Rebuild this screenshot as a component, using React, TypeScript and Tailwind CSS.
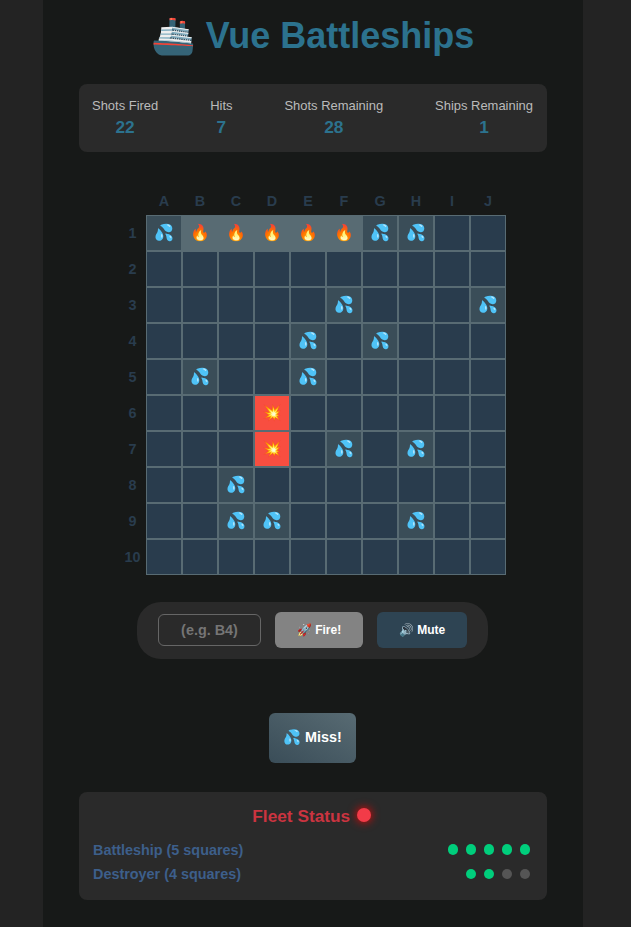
const COLUMNS = ['A', 'B', 'C', 'D', 'E', 'F', 'G', 'H', 'I', 'J'];

// M = miss, S = sunk, H = hit, . = untouched
const BOARD = [
  'MSSSSSMM..',
  '..........',
  '.....M...M',
  '....M.M...',
  '.M..M.....',
  '...H......',
  '...H.M.M..',
  '..M.......',
  '..MM...M..',
  '..........',
];

const CELLS: Record<string, { tone: string; mark: string }> = {
  '.': { tone: 'bg-[#293c4d]', mark: '' },
  M: { tone: 'bg-[#3a4d58]', mark: '💦' },
  S: { tone: 'bg-[#586b73]', mark: '🔥' },
  H: { tone: 'bg-[#f84e40]', mark: '💥' },
};

const STATS = [
  { label: 'Shots Fired', value: 22 },
  { label: 'Hits', value: 7 },
  { label: 'Shots Remaining', value: 28 },
  { label: 'Ships Remaining', value: 1 },
];

const FLEET = [
  { name: 'Battleship (5 squares)', dots: [true, true, true, true, true], dotClass: 'mb-px h-[11px]' },
  { name: 'Destroyer (4 squares)', dots: [true, true, false, false], dotClass: 'h-[10px]' },
];

function Stats() {
  return (
    <section className="mt-[14px] flex h-[68px] justify-between rounded-lg bg-[#2a2a2a] pt-3 pr-[14px] pl-[13px] text-center">
      {STATS.map((s) => (
        <div key={s.label}>
          <div className="text-[12.96px] leading-[19px] text-[#bbbbbb]">{s.label}</div>
          <div className="text-[17.28px] leading-6 font-bold text-[#2c728e]">{s.value}</div>
        </div>
      ))}
    </section>
  );
}

function Board() {
  return (
    <section className="mt-9 ml-10 w-[387px] text-[14.4px] font-bold text-[#293c4d]">
      <div className="flex h-[27px] pl-[27px]">
        {COLUMNS.map((c) => (
          <div key={c} className="w-9 text-center leading-[26px]">{c}</div>
        ))}
      </div>
      <div className="flex">
        <div className="w-[27px]">
          {BOARD.map((_, i) => (
            <div key={i} className="flex h-9 items-center justify-center pt-[2px]">{i + 1}</div>
          ))}
        </div>
        <div className="w-[360px]">
          {BOARD.map((row, r) => (
            <div key={r} className="flex">
              {row.split('').map((c, i) => (
                <div key={i} className={`flex size-9 items-center justify-center border border-[#586b73] text-[16px] leading-none font-normal ${CELLS[c].tone}`}>
                  {CELLS[c].mark}
                </div>
              ))}
            </div>
          ))}
        </div>
      </div>
    </section>
  );
}

function Controls() {
  return (
    <section className="mt-[27px] ml-[58px] flex h-[57px] w-[351px] items-start gap-[14px] rounded-[24px] bg-[#2a2a2a] px-[21px] pt-[10px]">
      <input
        placeholder="(e.g. B4)"
        className="mt-[2px] h-8 w-[103px] rounded-md border border-[#666666] bg-transparent text-center text-[14.4px] font-bold placeholder:text-[#757575]"
      />
      <button className="h-9 w-[88px] rounded-md bg-[#838383] text-[12px] font-bold whitespace-nowrap text-white">🚀 Fire!</button>
      <button className="h-9 w-[90px] rounded-md bg-[#2e4453] text-[12px] font-bold whitespace-nowrap text-white">🔊 Mute</button>
    </section>
  );
}

function Fleet() {
  return (
    <section className="mt-[29px] h-[108px] rounded-lg bg-[#2a2a2a] px-[14px] pt-3">
      <h2 className="flex h-6 items-center justify-center pr-[11px] pl-2 text-[17.28px] leading-6 font-bold text-[#cb3440]">
        Fleet Status
        <span className="-mt-[2px] ml-[6.5px] size-[14px] rounded-full bg-[#f23b48] shadow-[0_0_10px_#ff0000]" />
      </h2>
      <div className="mt-[10px]">
        {FLEET.map((ship) => (
          <div key={ship.name} className="flex h-6 items-center justify-between pr-[3px] text-[14.4px] leading-6 font-bold text-[#3d5f8b]">
            <span className="pb-px">{ship.name}</span>
            <span className="flex gap-2">
              {ship.dots.map((afloat, i) => (
                <span key={i} className={`w-[10px] rounded-full ${ship.dotClass} ${afloat ? 'bg-[#00ce7c]' : 'bg-[#555555]'}`} />
              ))}
            </span>
          </div>
        ))}
      </div>
    </section>
  );
}

export default function App() {
  return (
    <div className="h-[927px] overflow-hidden bg-[#232323] pl-[43px] font-['Liberation_Sans',sans-serif]">
      <main className="h-full w-[540px] bg-[#171918] px-9">
        <h1 className="h-[70px] pr-px text-center text-[36px] leading-[72px] font-bold whitespace-pre text-[#2c728e]">🚢 Vue Battleships</h1>
        <Stats />
        <Board />
        <Controls />
        <div className="mt-[54px] ml-[190px] flex h-[50px] w-[87px] items-center justify-center rounded-md bg-linear-to-tr from-[#3a4d58] to-[#586b73] text-[14.4px] font-bold whitespace-nowrap text-white">
          💦 Miss!
        </div>
        <Fleet />
      </main>
    </div>
  );
}
